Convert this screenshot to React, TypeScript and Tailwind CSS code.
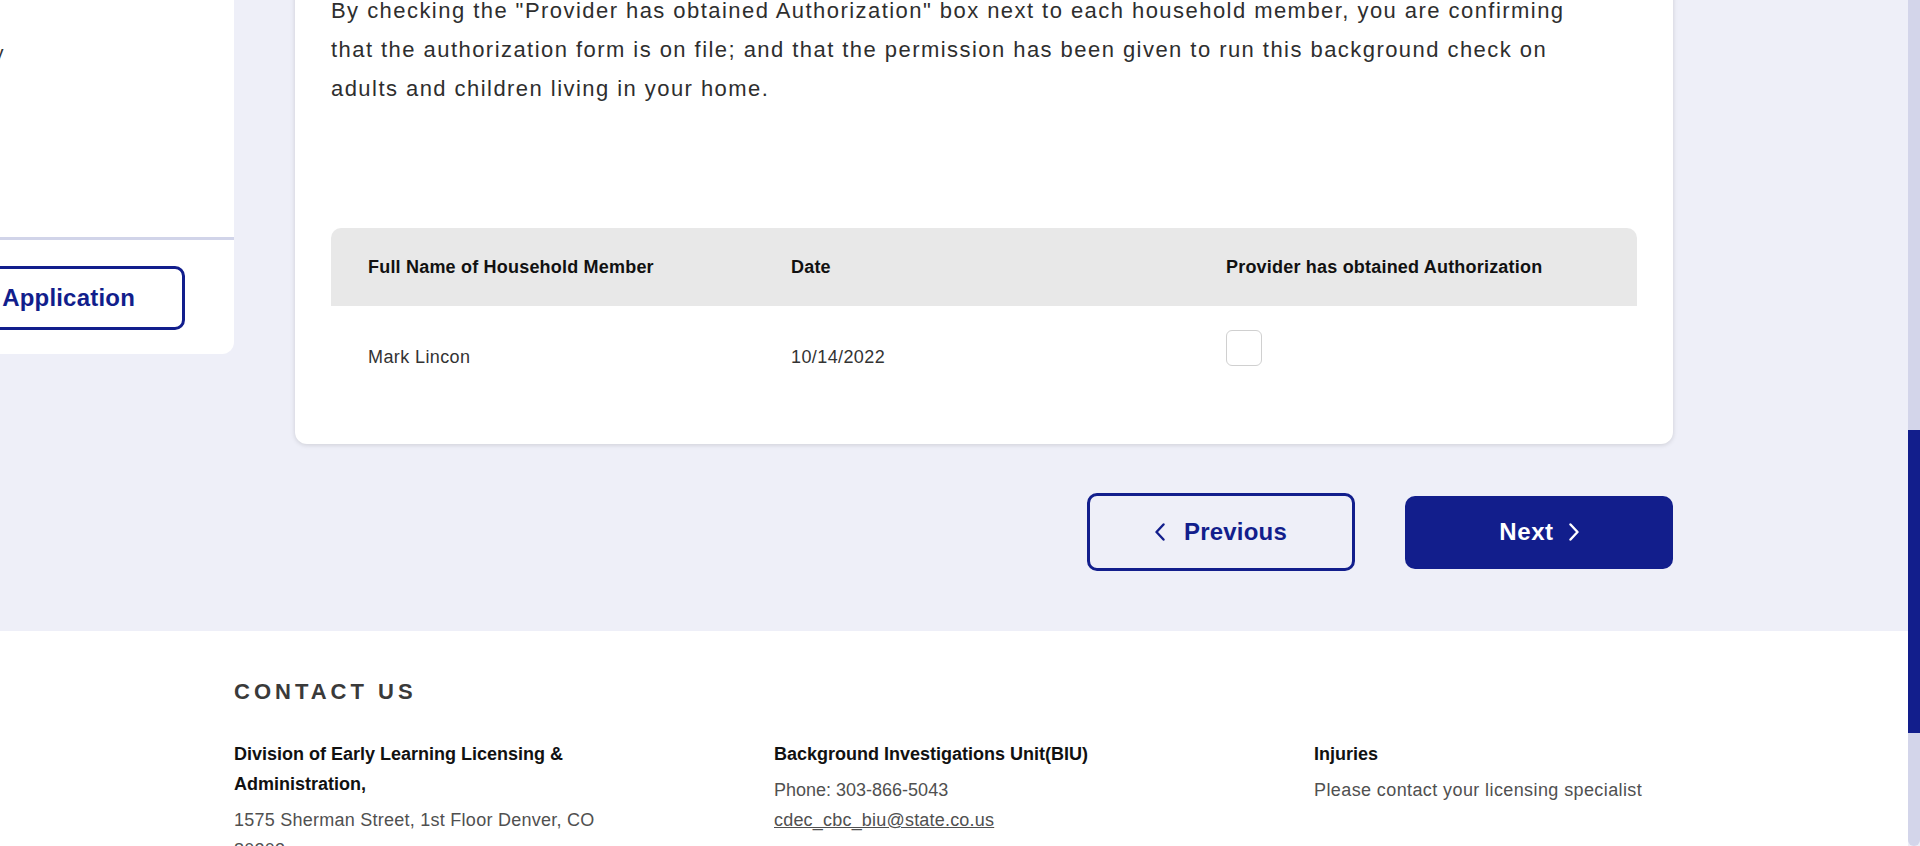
import React from "react";

function Chevron({ dir }: { dir: "left" | "right" }) {
  return (
    <svg
      width="10"
      height="18"
      viewBox="0 0 10 18"
      fill="none"
      stroke="currentColor"
      strokeWidth="2.4"
      strokeLinecap="round"
      strokeLinejoin="round"
    >
      {dir === "left" ? <path d="M8.5 1.5 1.5 9l7 7.5" /> : <path d="M1.5 1.5 8.5 9l-7 7.5" />}
    </svg>
  );
}

function SidePanel() {
  return (
    <aside className="w-[234px] shrink-0 -mt-[100px] bg-white rounded-br-[12px] overflow-hidden">
      <div className="h-[337px] pt-[139px]">
        <p className="-ml-[82px] whitespace-nowrap text-[20px] leading-[28px] text-[#333]">
          Summary
        </p>
      </div>
      <div className="border-t-[3px] border-[#d1d4e9] pt-[26px] pb-[24px]">
        <button className="-ml-[40px] mr-[49px] w-[225px] h-[64px] flex items-center justify-end pr-[47px] border-[3px] border-[#121e8c] rounded-[10px] text-[24px] font-bold tracking-[0.2px] text-[#121e8c] whitespace-nowrap">
          View Application
        </button>
      </div>
    </aside>
  );
}

function AuthorizationCard() {
  return (
    <div className="w-[1378px] -mt-[100px] bg-white rounded-[12px] shadow-[0_1px_5px_rgba(0,0,0,0.14)] pt-[91px] px-[36px] pb-[36px]">
      <p className="max-w-[1260px] text-[22px] leading-[39px] tracking-[1.45px] text-[#2e2e2e]">
        By checking the "Provider has obtained Authorization" box next to each household member, you are
        confirming that the authorization form is on file; and that the permission has been given to run
        this background check on adults and children living in your home.
      </p>

      <div className="mt-[120px]">
        <div className="grid grid-cols-[423px_435px_1fr] h-[78px] items-center bg-[#e8e8e8] rounded-t-[10px] text-[18px] font-bold tracking-[0.2px] text-[#111]">
          <div className="pl-[37px]">Full Name of Household Member</div>
          <div className="pl-[37px]">Date</div>
          <div className="pl-[37px]">Provider has obtained Authorization</div>
        </div>
        <div className="grid grid-cols-[423px_435px_1fr] h-[102px] items-center text-[18px] tracking-[0.4px] text-[#333]">
          <div className="pl-[37px]">Mark Lincon</div>
          <div className="pl-[37px]">10/14/2022</div>
          <div className="pl-[37px] self-start pt-[24px]">
            <div className="w-[36px] h-[36px] border border-[#d0d0d0] rounded-[6px] bg-white" />
          </div>
        </div>
      </div>
    </div>
  );
}

function NavButtons() {
  return (
    <div className="mt-[49px] flex items-center justify-end gap-[50px]">
      <button className="w-[268px] h-[78px] flex items-center justify-center gap-[19px] border-[3px] border-[#121e8c] rounded-[10px] text-[24px] font-bold tracking-[0.2px] text-[#121e8c]">
        <Chevron dir="left" />
        Previous
      </button>
      <button className="w-[268px] h-[73px] flex items-center justify-center gap-[15px] bg-[#121e8c] rounded-[10px] text-[24px] font-bold tracking-[0.6px] text-white">
        Next
        <Chevron dir="right" />
      </button>
    </div>
  );
}

function Footer() {
  return (
    <footer className="bg-white pl-[234px] pt-[46px]">
      <h2 className="text-[22px] leading-[30px] font-bold tracking-[4px] text-[#3a3a3a]">CONTACT US</h2>
      <div className="mt-[32px] grid grid-cols-[400px_400px_400px] gap-x-[140px] text-[18px] leading-[30px]">
        <div>
          <h3 className="font-bold text-[#111] mb-[6px]">Division of Early Learning Licensing &amp; Administration,</h3>
          <p className="text-[#505050] tracking-[0.25px]">1575 Sherman Street, 1st Floor Denver, CO 80203</p>
        </div>
        <div>
          <h3 className="font-bold text-[#111] mb-[6px]">Background Investigations Unit(BIU)</h3>
          <p className="text-[#505050]">Phone: 303-866-5043</p>
          <a className="text-[#505050] underline tracking-[0.2px]">cdec_cbc_biu@state.co.us</a>
        </div>
        <div>
          <h3 className="font-bold text-[#111] mb-[6px]">Injuries</h3>
          <p className="text-[#505050] tracking-[0.4px]">Please contact your licensing specialist</p>
        </div>
      </div>
    </footer>
  );
}

export default function App() {
  return (
    <div className="flex h-screen overflow-hidden bg-[#eeeff8] font-['Liberation_Sans',Arial,sans-serif]">
      <div className="flex-1 flex flex-col overflow-hidden">
        <section className="flex items-start gap-[61px] pb-[60px]">
          <SidePanel />
          <div className="flex flex-col">
            <AuthorizationCard />
            <NavButtons />
          </div>
        </section>
        <Footer />
      </div>
      <div className="w-[12px] shrink-0 bg-[#d3d5ea] rounded-b-[6px]">
        <div className="mt-[430px] h-[303px] bg-[#121e8c]" />
      </div>
    </div>
  );
}
